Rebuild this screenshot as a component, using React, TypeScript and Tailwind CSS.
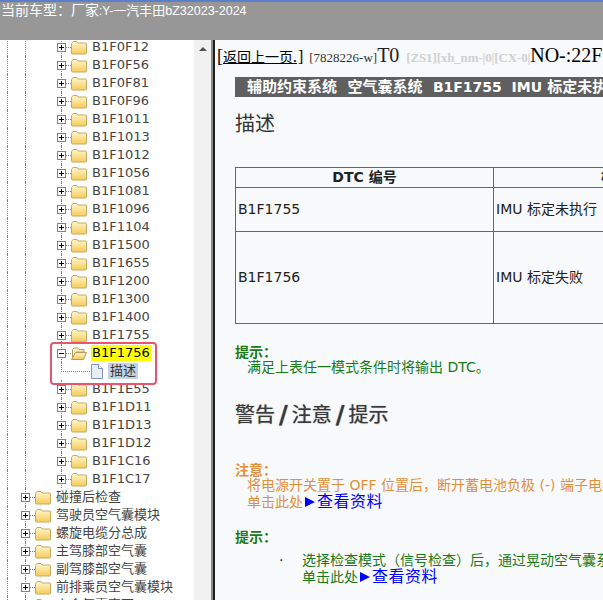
import type { ReactNode } from 'react'

const sans = 'font-["DejaVu_Sans","Noto_Sans_CJK_SC",sans-serif]'

type Node = { label: string; level: 2 | 3; open?: boolean }

const level3 = [
  'B1F0F12', 'B1F0F56', 'B1F0F81', 'B1F0F96', 'B1F1011', 'B1F1013', 'B1F1012', 'B1F1056',
  'B1F1081', 'B1F1096', 'B1F1104', 'B1F1500', 'B1F1655', 'B1F1200', 'B1F1300', 'B1F1400', 'B1F1755',
]
const level3b = ['B1F1E55', 'B1F1D11', 'B1F1D13', 'B1F1D12', 'B1F1C16', 'B1F1C17']
const level2 = ['碰撞后检查', '驾驶员空气囊模块', '螺旋电缆分总成', '主驾膝部空气囊', '副驾膝部空气囊', '前排乘员空气囊模块', '安全气囊变更']

function Folder({ open }: { open?: boolean }) {
  return (
    <svg width="16" height="15" viewBox="0 0 16 15" className="shrink-0">
      <defs>
        <linearGradient id="fold" x1="0" y1="0" x2="0" y2="1">
          <stop offset="0" stopColor="#fff8d0" />
          <stop offset="1" stopColor="#f6cb58" />
        </linearGradient>
      </defs>
      {open ? (
        <>
          <path d="M1.5 12V3.5L3 2h3.5L8 3.5h5V6H5z" fill="#fdf3c4" stroke="#b79a55" />
          <path d="M.5 13.5L4.5 6.5h11l-3 7z" fill="url(#fold)" stroke="#b79a55" />
        </>
      ) : (
        <path d="M.5 3.5L2 1.5h4L7 3h7.5q1 0 1 1v9q0 1-1 1h-13q-1 0-1-1z" fill="url(#fold)" stroke="#c4a964" />
      )}
    </svg>
  )
}

function Expander({ open }: { open?: boolean }) {
  return (
    <span className="relative w-[9px] h-[9px] border border-[#808080] bg-white shrink-0 flex items-center justify-center">
      <span className="w-[5px] h-px bg-black" />
      {!open && <span className="absolute w-px h-[5px] bg-black" />}
    </span>
  )
}

function Guide({ on = true }: { on?: boolean }) {
  return <span className={`w-[18px] h-full shrink-0 ${on ? 'border-l border-dotted border-[#808080]' : ''}`} />
}

function TreeRow({ label, level, open }: Node) {
  return (
    <div className="h-[18px] flex items-center pl-[7px]">
      <Guide />
      {level === 3 ? (
        <>
          <Guide />
          <Guide on={false} />
        </>
      ) : null}
      <span className="relative h-full ml-[-4px] flex items-center">
        <span className="absolute left-[4px] top-0 h-full border-l border-dotted border-[#808080]" />
        <Expander open={open} />
        <span className="w-[5px] border-t border-dotted border-[#808080]" />
      </span>
      <Folder open={open} />
      <span className={`ml-[4px] px-px text-[13px] leading-[16px] whitespace-nowrap ${open ? 'bg-[#ffff00] text-black' : 'text-[#444]'}`}>{label}</span>
    </div>
  )
}

function LeafRow() {
  return (
    <div className="h-[18px] flex items-center pl-[7px]">
      <Guide />
      <Guide />
      <Guide on={false} />
      <span className="w-[29px] h-full flex items-start shrink-0">
        <span className="w-full h-[10px] border-l border-b border-dotted border-[#808080]" />
      </span>
      <svg width="14" height="15" viewBox="0 0 14 15" className="shrink-0">
        <path d="M1.5.5h7l4 4v10h-11z" fill="#e8eefa" stroke="#7f93c0" />
        <path d="M8.5.5v4h4" fill="#fff" stroke="#7f93c0" />
      </svg>
      <span className="ml-[4px] px-[2px] text-[13px] leading-[16px] bg-[#c4d2e6] text-[#333] whitespace-nowrap">描述</span>
    </div>
  )
}

function Notice({ title, color, children }: { title: string; color: string; children: ReactNode }) {
  return (
    <div className={`text-[14px] leading-[15px] ${color}`}>
      <div className="font-bold">{title}</div>
      {children}
    </div>
  )
}

function MoreLink({ color }: { color: string }) {
  return (
    <div className={`mt-px whitespace-nowrap ${color}`}>
      单击此处
      <span className="inline-block mx-[2px] w-0 h-0 border-y-[5px] border-y-transparent border-l-[10px] border-l-[#0000ff]" />
      <span className="text-[#0000ff] text-[16px] tracking-[0.5px]">查看资料</span>
    </div>
  )
}

export default function App() {
  return (
    <div className={`w-[603px] h-[600px] overflow-hidden flex flex-col bg-white ${sans}`}>
      <header className="h-10 shrink-0 border-t-2 border-[#5b7fc8] bg-[#979797] text-white text-[14px] leading-[16px] whitespace-nowrap pl-px">
        当前车型：厂家<span className='text-[12px] font-["Liberation_Sans",sans-serif]'>:Y-</span>
        <span className="text-[13px]">一汽丰田</span>
        <span className='text-[12.5px] font-["Liberation_Sans",sans-serif]'>bZ32023-2024</span>
      </header>
      <div className="flex-1 min-h-0 flex">
        <aside className="relative w-[194px] shrink-0 overflow-hidden">
          <div className="mt-[-2px]">
            {level3.map((b) => (
              <TreeRow key={b} label={b} level={3} />
            ))}
            <TreeRow label="B1F1756" level={3} open />
            <LeafRow />
            {level3b.map((b) => (
              <TreeRow key={b} label={b} level={3} />
            ))}
            {level2.map((b) => (
              <TreeRow key={b} label={b} level={2} />
            ))}
          </div>
          <div className="absolute left-[50px] top-[302px] w-[107px] h-[43px] rounded-[4px] border-[2.5px] border-[#e9566c]" />
        </aside>
        <div className="w-[17px] shrink-0 bg-[#f1f1f1] flex flex-col items-center pt-[7px]">
          <span className="w-0 h-0 border-x-[4px] border-x-transparent border-b-[4px] border-b-[#505050]" />
        </div>
        <div className="w-[2px] shrink-0 bg-[#8a8a8a]" />
        <div className="w-[2px] shrink-0 bg-[#202020]" />
        <main className="flex-1 min-w-0 overflow-hidden bg-[#f8f9fa] text-[#333] pl-[20px]">
          <div className='ml-[-18px] h-[25px] flex items-baseline whitespace-nowrap font-["Liberation_Serif","Noto_Sans_CJK_SC",serif] text-black'>
            <span className="text-[18px] leading-[25px]">[</span>
            <span className='text-[14px] underline font-["Noto_Sans_CJK_SC",sans-serif]'>返回上一页.</span>
            <span className="text-[16px] ml-px">]</span>
            <span className="ml-[6px] text-[13px] text-[#333]">[7828226-w]</span>
            <span className="text-[20px] text-[#222]">T0</span>
            <span className="ml-[7px] text-[13px] font-bold text-[#d0d0d0] tracking-[-0.15px]">[ZS1][xh_nm-|0|[CX-0|</span>
            <span className="text-[20px]">NO-:22F</span>
          </div>
          <div className="mt-[12px] w-[500px] h-5 bg-[#5f5f5f] pl-3 text-white font-bold text-[15px] leading-5 whitespace-nowrap">
            辅助约束系统&nbsp;&nbsp;空气囊系统&nbsp;&nbsp;<span className="text-[14px]">B1F1755&nbsp;&nbsp;IMU</span> 标定未执行
          </div>
          <h2 className="mt-[15px] text-[20px] leading-[24px]">描述</h2>
          <table className="mt-[31px] w-[530px] table-fixed border-collapse text-[14px] text-[#222]">
            <tbody>
              <tr className="h-[20px] font-bold">
                <td className="w-[258px] border border-[#666] text-center leading-[19px]">DTC 编号</td>
                <td className="border border-[#666] text-center leading-[19px]">检测条件</td>
              </tr>
              <tr className="h-[44px]">
                <td className="border border-[#666] px-[2px]">B1F1755</td>
                <td className="border border-[#666] px-[2px]">IMU 标定未执行</td>
              </tr>
              <tr className="h-[92px]">
                <td className="border border-[#666] px-[2px]">B1F1756</td>
                <td className="border border-[#666] px-[2px]">IMU 标定失败</td>
              </tr>
            </tbody>
          </table>
          <div className="mt-[21px]">
            <Notice title="提示：" color="text-[#1a7a1a]">
              <div className="pl-3">满足上表任一模式条件时将输出 DTC。</div>
            </Notice>
          </div>
          <h2 className="mt-[28px] text-[20px] leading-[24px] text-[#3a3a3a] [text-shadow:0_0_1px_#666] flex items-center">
            警告<span className="mx-[4px] text-[24px] leading-none font-bold">/</span>注意<span className="mx-[4px] text-[24px] leading-none font-bold">/</span>提示
          </h2>
          <div className="mt-[36px]">
            <Notice title="注意：" color="text-[#e0903c]">
              <div className="pl-3 whitespace-nowrap">将电源开关置于 OFF 位置后，断开蓄电池负极 (-) 端子电缆</div>
              <div className="pl-3"><MoreLink color="text-[#e0903c]" /></div>
            </Notice>
          </div>
          <div className="mt-[20px]">
            <Notice title="提示：" color="text-[#1a7a1a]">
              <div className="mt-[8px] flex whitespace-nowrap">
                <span className="w-[67px] pl-[44px] shrink-0 text-[#333]">·</span>
                <div>
                  <div>选择检查模式（信号检查）后，通过晃动空气囊系统</div>
                  <MoreLink color="text-[#1a7a1a]" />
                </div>
              </div>
            </Notice>
          </div>
        </main>
      </div>
    </div>
  )
}
